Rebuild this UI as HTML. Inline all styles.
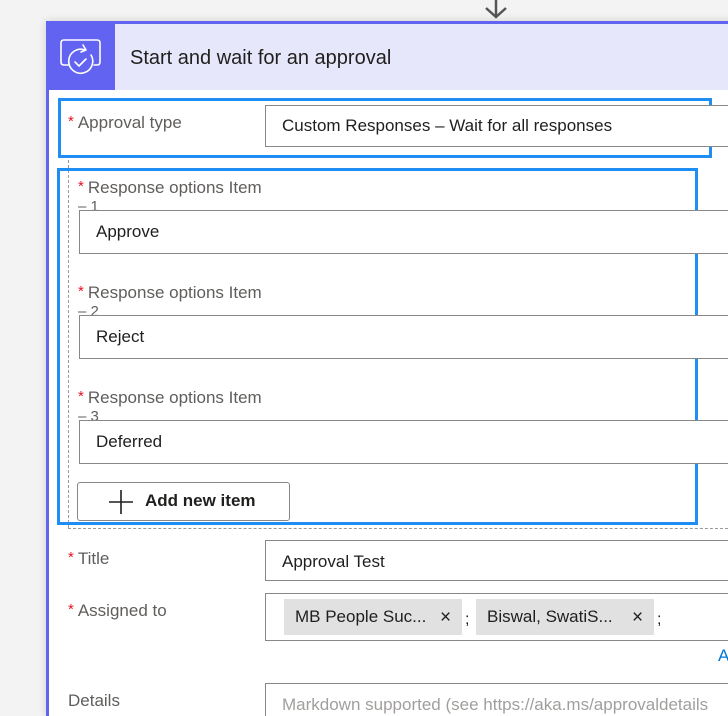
<!DOCTYPE html>
<html><head><style>
html,body{margin:0;width:728px;height:716px;overflow:hidden;}
body{background:#f3f3f3;position:relative;font-family:"Liberation Sans",sans-serif;}
.a{position:absolute;white-space:nowrap;}
.card{left:46px;top:21px;width:700px;height:695px;background:#fff;border-left:3px solid #6264f1;border-top:3px solid #6264f1;box-shadow:0 0 8px rgba(0,0,0,.15);box-sizing:border-box;}
.lbl{font-size:17px;color:#605e5c;}
.lbl i{color:#e81123;font-style:normal;font-size:15px;margin-right:4px;vertical-align:2px;}
.inp{border:1px solid #8a8886;background:#fff;box-sizing:border-box;font-size:17px;color:#201f1e;padding-left:16px;}
.blue{border:3px solid #1e8ef5;box-sizing:border-box;}
.chip{background:#e1e1e1;height:36px;top:599px;font-size:17px;color:#201f1e;line-height:36px;padding-left:11px;box-sizing:border-box;}
</style></head><body>
<svg class="a" style="left:481px;top:0" width="30" height="20"><path d="M15 0V16M5 8L15 17L25 8" stroke="#555" stroke-width="2.5" fill="none"/></svg>
<div class="a card"></div>
<div class="a" style="left:49px;top:24px;width:679px;height:66px;background:#e7e7fb"></div>
<div class="a" style="left:49px;top:24px;width:66px;height:66px;background:#6264f1"></div>
<svg class="a" style="left:49px;top:24px" width="66" height="66"><g stroke="#fff" stroke-width="1.6" fill="none" stroke-linecap="round" stroke-linejoin="round"><path d="M19 41h-4q-3 0-3-3V19q0-3 3-3h33q3 0 3 3v19q0 3-3 3h-3"/><path d="M42 31A12 12 0 1 1 36 26"/><path d="M34 21l3 5l-5 2"/><path d="M26 38l4 4l7-7"/></g></svg>
<div class="a" style="left:130px;top:47px;font-size:20px;color:#201f1e">Start and wait for an approval</div>

<div class="a blue" style="left:58px;top:98px;width:654px;height:60px"></div>
<div class="a lbl" style="left:68px;top:113px"><i>*</i>Approval type</div>
<div class="a inp" style="left:265px;top:105px;width:480px;height:42px;line-height:40px">Custom Responses – Wait for all responses</div>

<div class="a" style="left:68px;top:160px;width:0;height:368px;border-left:1px dashed #999"></div>
<div class="a" style="left:68px;top:528px;width:680px;border-top:1px dashed #999"></div>
<div class="a blue" style="left:57px;top:168px;width:641px;height:357px"></div>

<div class="a lbl" style="left:78px;top:178px"><i>*</i>Response options Item</div>
<div class="a lbl" style="left:78px;top:198px;font-size:15px">– 1</div>
<div class="a inp" style="left:79px;top:210px;width:660px;height:44px;line-height:42px">Approve</div>
<div class="a lbl" style="left:78px;top:283px"><i>*</i>Response options Item</div>
<div class="a lbl" style="left:78px;top:303px;font-size:15px">– 2</div>
<div class="a inp" style="left:79px;top:315px;width:660px;height:44px;line-height:42px">Reject</div>
<div class="a lbl" style="left:78px;top:388px"><i>*</i>Response options Item</div>
<div class="a lbl" style="left:78px;top:408px;font-size:15px">– 3</div>
<div class="a inp" style="left:79px;top:420px;width:660px;height:44px;line-height:42px">Deferred</div>

<div class="a" style="left:77px;top:482px;width:213px;height:39px;border:1px solid #8a8886;border-radius:3px;box-sizing:border-box"></div>
<svg class="a" style="left:108px;top:489px" width="26" height="26"><path d="M13 1V25M1 13H25" stroke="#201f1e" stroke-width="1.6"/></svg>
<div class="a" style="left:145px;top:491px;font-size:17px;font-weight:bold;color:#201f1e">Add new item</div>

<div class="a lbl" style="left:68px;top:549px"><i>*</i>Title</div>
<div class="a inp" style="left:265px;top:540px;width:480px;height:41px;line-height:41px">Approval Test</div>
<div class="a lbl" style="left:68px;top:601px"><i>*</i>Assigned to</div>
<div class="a inp" style="left:265px;top:593px;width:480px;height:48px"></div>
<div class="a chip" style="left:284px;width:178px">MB People Suc...</div>
<div class="a" style="left:440px;top:607px;font-size:19px;color:#201f1e">×</div>
<div class="a" style="left:465px;top:611px;font-size:16px;color:#201f1e">;</div>
<div class="a chip" style="left:476px;width:178px">Biswal, SwatiS...</div>
<div class="a" style="left:632px;top:607px;font-size:19px;color:#201f1e">×</div>
<div class="a" style="left:657px;top:611px;font-size:16px;color:#201f1e">;</div>
<div class="a" style="left:718px;top:646px;font-size:17px;color:#0078d4">A</div>
<div class="a lbl" style="left:68px;top:691px">Details</div>
<div class="a inp" style="left:265px;top:683px;width:480px;height:45px;line-height:42px;color:#a19f9d">Markdown supported (see https://aka.ms/approvaldetails</div>
</body></html>
